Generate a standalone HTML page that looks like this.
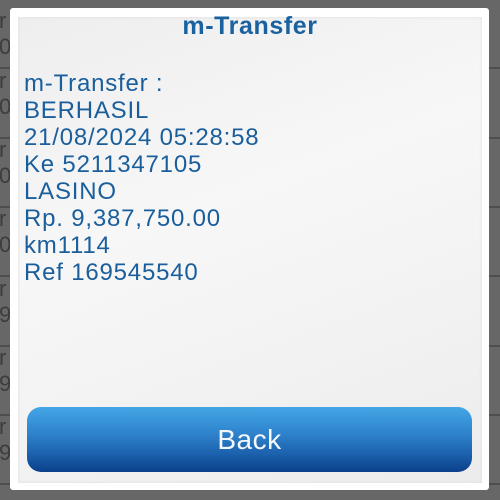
<!DOCTYPE html>
<html><head><meta charset="utf-8"><style>
html,body{margin:0;padding:0;width:500px;height:500px;overflow:hidden;background:#676767;font-family:"Liberation Sans",sans-serif;}
.bg{position:absolute;left:0;top:0;width:500px;height:500px;}
.row{position:absolute;left:0;width:500px;height:69px;border-bottom:2px solid #4e4e4e;box-sizing:border-box;}
.row span{position:absolute;left:-1px;color:#3d3d3d;font-size:22px;line-height:26px;}
.dlg{position:absolute;left:10px;top:8px;width:479px;height:482px;background:#fff;border-radius:3px;}
.panel{position:absolute;left:8px;top:9px;width:464px;height:466px;background:linear-gradient(160deg,#eeeeee 0%,#f7f7f7 40%,#f2f2f2 70%,#ececec 100%);box-shadow:0 0 3px #ddd inset;}
.title{position:absolute;left:0;width:464px;top:-6px;text-align:center;color:#1a61a0;font-weight:bold;font-size:25px;letter-spacing:0.6px;line-height:30px;}
.txt{position:absolute;left:6px;top:53px;color:#1a5e9c;font-size:24px;letter-spacing:0.8px;line-height:27px;}
.btn{position:absolute;left:9px;top:390px;width:445px;height:65px;border-radius:14px;background:linear-gradient(#44a6e6 0%,#2f84cd 40%,#1a5eaa 75%,#0b3f8a 100%);color:#f4f7fb;font-size:28px;letter-spacing:0.5px;text-align:center;line-height:66px;}
</style></head><body>
<div class="bg">
<div class="row" style="top:0"><span style="top:8px">r<br>0</span></div>
<div class="row" style="top:70px"><span style="top:-2px">r<br>0</span></div>
<div class="row" style="top:139px"><span style="top:-2px">r<br>0</span></div>
<div class="row" style="top:208px"><span style="top:-2px">r<br>0</span></div>
<div class="row" style="top:278px"><span style="top:-2px">r<br>9</span></div>
<div class="row" style="top:347px"><span style="top:-2px">r<br>9</span></div>
<div class="row" style="top:416px"><span style="top:-2px">r<br>9</span></div>
</div>
<div class="dlg"><div class="panel">
<div class="title">m-Transfer</div>
<div class="txt">m-Transfer :<br>BERHASIL<br>21/08/2024 05:28:58<br>Ke 5211347105<br>LASINO<br>Rp. 9,387,750.00<br>km1114<br>Ref 169545540</div>
<div class="btn">Back</div>
</div></div>
</body></html>
